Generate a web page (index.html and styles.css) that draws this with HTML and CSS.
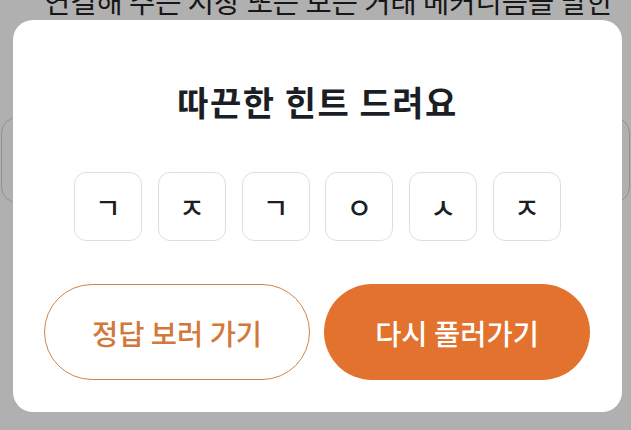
FILE: index.html
```html
<!DOCTYPE html>
<html>
<head>
  <meta name="viewport" content="initial-scale=1" />
  <title>힌트</title>
  <link rel="stylesheet" href="styles.css">
</head>
<body>
  <div class="page">
    <p class="definition">연결해 주는 시장 또는 모든 거래 메커니즘을 말한</p>
    <div class="answer-card"></div>
  </div>

  <div class="overlay">
    <div class="modal">
      <h2 class="modal-title">따끈한 힌트 드려요</h2>

      <div class="hint-row">
        <div class="hint-tile">ㄱ</div>
        <div class="hint-tile">ㅈ</div>
        <div class="hint-tile">ㄱ</div>
        <div class="hint-tile">ㅇ</div>
        <div class="hint-tile">ㅅ</div>
        <div class="hint-tile">ㅈ</div>
      </div>

      <div class="modal-actions">
        <button class="btn btn-outline">정답 보러 가기</button>
        <button class="btn btn-fill">다시 풀러가기</button>
      </div>
    </div>
  </div>
</body>
</html>
```

FILE: styles.css
```css
* {
  box-sizing: border-box;
}

body {
  margin: 0;
  background: #fff;
  font-family: "Noto Sans CJK KR", "Noto Sans", sans-serif;
  color: #1b1e25;
}

.page {
  padding: 0 1px;
}

.definition {
  margin: -17px 0 0;
  text-align: center;
  font-size: 28.5px;
  line-height: 36px;
  color: #222;
  padding-left: 26px;
}

.answer-card {
  margin-top: 98px;
  height: 86px;
  border: 1px solid #d4d4d4;
  border-radius: 16px;
}

/* dim layer over the page */
.overlay {
  position: fixed;
  top: 0;
  left: 0;
  right: 0;
  bottom: 0;
  background: rgba(0, 0, 0, 0.31);
  padding: 20px 0 0 13px;
}

.modal {
  width: 609px;
  height: 392px;
  background: #fff;
  border-radius: 20px;
  padding: 64px 31px 0;
}

.modal-title {
  margin: 0;
  text-align: center;
  font-size: 34px;
  line-height: 36px;
  letter-spacing: 1.5px;
  font-weight: 700;
  color: #1b1e25;
}

.hint-row {
  display: flex;
  justify-content: center;
  gap: 15.8px;
  margin-top: 52px;
}

.hint-tile {
  width: 68px;
  height: 69px;
  border: 1px solid #dedede;
  border-radius: 12px;
  display: flex;
  align-items: center;
  justify-content: center;
  font-size: 28px;
  font-weight: 500;
  color: #1b1e25;
}

.modal-actions {
  display: flex;
  gap: 14px;
  margin-top: 43px;
}

.btn {
  width: 266px;
  height: 96px;
  border-radius: 48px;
  font-family: inherit;
  font-size: 28.5px;
  font-weight: 500;
  cursor: pointer;
}

.btn-outline {
  background: #fff;
  border: 1.5px solid #c98549;
  color: #d4773a;
}

.btn-fill {
  background: #e2722e;
  border: none;
  color: #fff;
}
```
